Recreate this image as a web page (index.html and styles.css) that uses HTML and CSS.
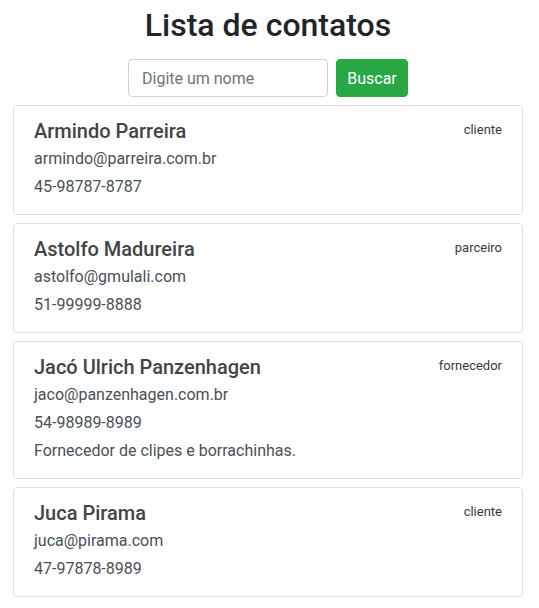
FILE: index.html
```html
<!DOCTYPE html>
<html lang="pt-BR">
<head>
<meta charset="utf-8">
<title>Lista de contatos</title>
<link rel="stylesheet" href="styles.css">
</head>
<body>
<div class="container">
  <h1 class="title">Lista de contatos</h1>
  <form class="search">
    <input class="search-input" type="text" placeholder="Digite um nome">
    <button class="search-btn" type="button">Buscar</button>
  </form>
  <div class="list">
    <div class="card">
      <div class="card-head"><h5 class="name">Armindo Parreira</h5><span class="tag">cliente</span></div>
      <p class="line">armindo@parreira.com.br</p>
      <p class="line">45-98787-8787</p>
    </div>
    <div class="card">
      <div class="card-head"><h5 class="name">Astolfo Madureira</h5><span class="tag">parceiro</span></div>
      <p class="line">astolfo@gmulali.com</p>
      <p class="line">51-99999-8888</p>
    </div>
    <div class="card">
      <div class="card-head"><h5 class="name">Jacó Ulrich Panzenhagen</h5><span class="tag">fornecedor</span></div>
      <p class="line">jaco@panzenhagen.com.br</p>
      <p class="line">54-98989-8989</p>
      <p class="line">Fornecedor de clipes e borrachinhas.</p>
    </div>
    <div class="card">
      <div class="card-head"><h5 class="name">Juca Pirama</h5><span class="tag">cliente</span></div>
      <p class="line">juca@pirama.com</p>
      <p class="line">47-97878-8989</p>
    </div>
  </div>
</div>
</body>
</html>
```

FILE: styles.css
```css
* { box-sizing: border-box; }
html, body { margin: 0; padding: 0; background: #fff; }
body {
  font-family: Roboto, "Liberation Sans", sans-serif;
  color: #495057;
}
.container {
  width: 510px;
  margin-left: 13px;
  padding-top: 5px;
}
.title {
  margin: 0;
  font-size: 32px;
  line-height: 40px;
  font-weight: 500;
  color: #212529;
  text-align: center;
}
.search {
  display: flex;
  justify-content: center;
  gap: 8px;
  margin-top: 14px;
}
.search-input {
  width: 200px;
  height: 38px;
  border: 1px solid #ced4da;
  border-radius: 4px;
  padding: 0 13px;
  font-family: inherit;
  font-size: 16px;
  color: #495057;
  outline: none;
}
.search-input::placeholder { color: #6c757d; opacity: 1; }
.search-btn {
  width: 72px;
  height: 38px;
  border: 1px solid #28a745;
  border-radius: 4px;
  background: #28a745;
  color: #fff;
  font-family: inherit;
  font-size: 16px;
  padding: 0;
}
.list {
  display: flex;
  flex-direction: column;
  gap: 8px;
  margin-top: 8px;
}
.card {
  border: 1px solid #dfdfdf;
  border-radius: 4px;
  padding: 13px 20px 13px;
}
.card-head {
  display: flex;
  justify-content: space-between;
  align-items: flex-start;
  margin-bottom: 2px;
}
.name {
  margin: 0;
  font-size: 20px;
  line-height: 24px;
  font-weight: 500;
  color: #444;
}
.tag {
  font-size: 13px;
  line-height: 18px;
  margin-top: 2px;
  color: #343a40;
}
.line {
  margin: 0;
  font-size: 16px;
  line-height: 28px;
}
```
